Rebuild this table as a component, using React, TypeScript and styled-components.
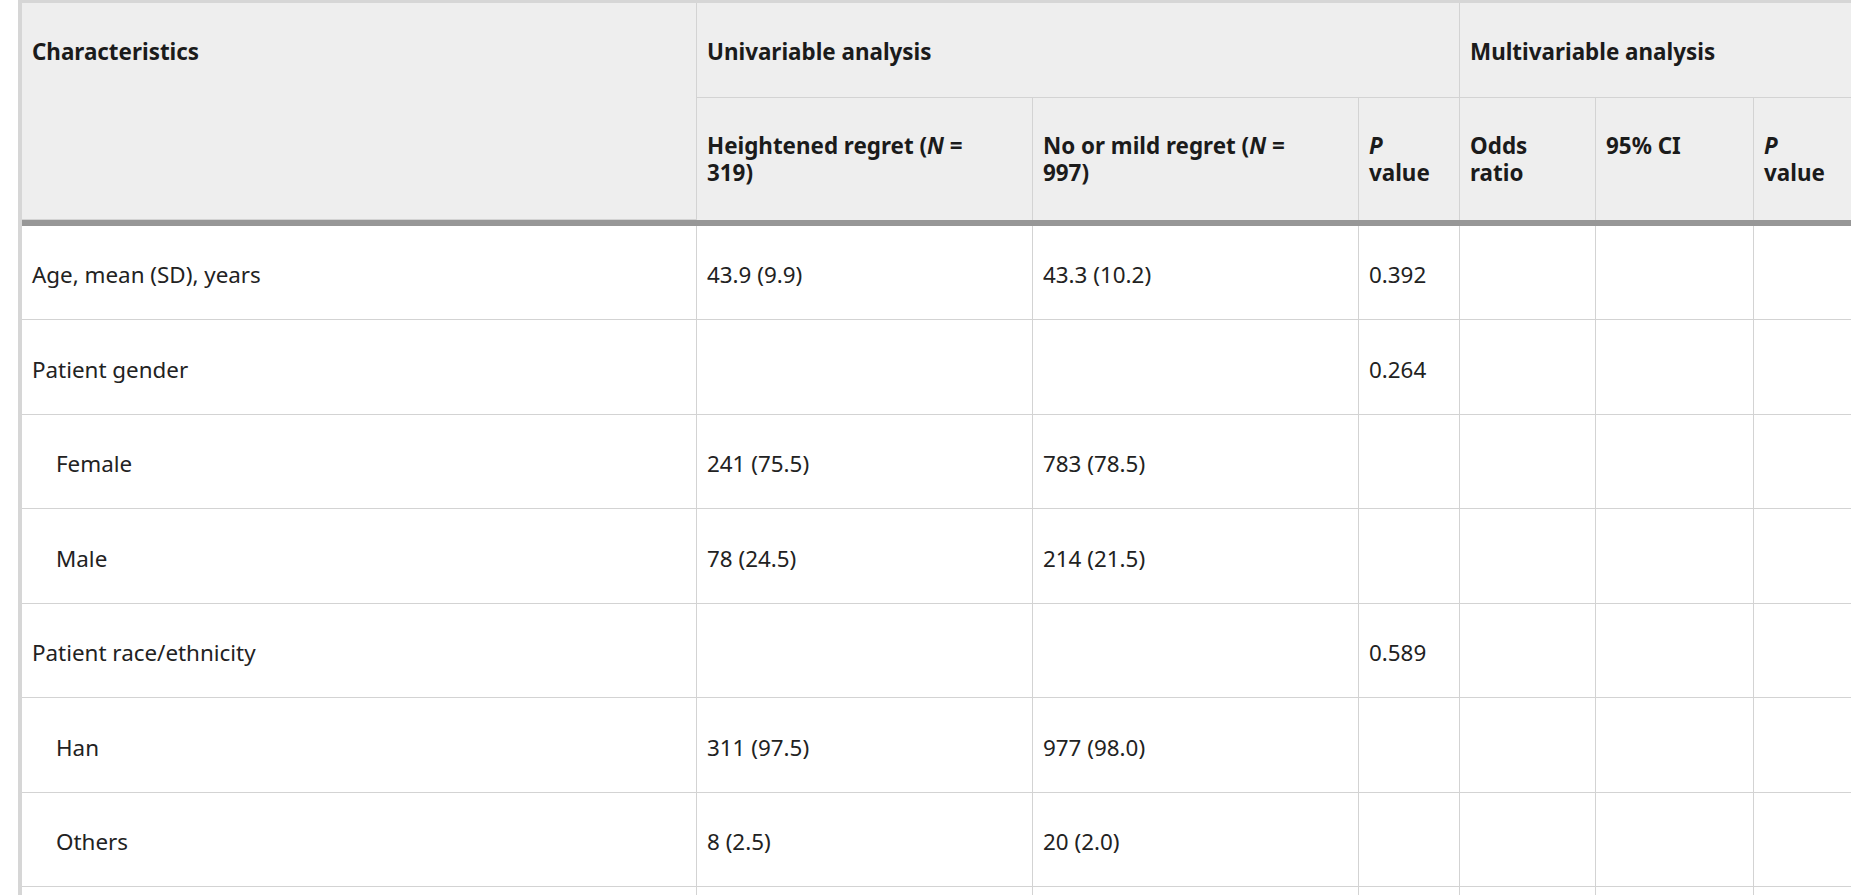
import React from 'react';
import styled, { createGlobalStyle } from 'styled-components';

type Row = {
  label: string;
  sub?: boolean;
  high?: string;
  low?: string;
  p?: string;
};

const rows: Row[] = [
  { label: 'Age, mean (SD), years', high: '43.9 (9.9)', low: '43.3 (10.2)', p: '0.392' },
  { label: 'Patient gender', p: '0.264' },
  { label: 'Female', sub: true, high: '241 (75.5)', low: '783 (78.5)' },
  { label: 'Male', sub: true, high: '78 (24.5)', low: '214 (21.5)' },
  { label: 'Patient race/ethnicity', p: '0.589' },
  { label: 'Han', sub: true, high: '311 (97.5)', low: '977 (98.0)' },
  { label: 'Others', sub: true, high: '8 (2.5)', low: '20 (2.0)' },
  { label: 'Education level', p: '0.118' },
];

const colWidths = [675, 336, 326, 101, 136, 158, 102];

const App: React.FC = () => {
  return (
    <>
      <GlobalStyle />
      <Page>
        <STable>
          <colgroup>
            {colWidths.map((w, i) => (
              <col key={i} style={{ width: w }} />
            ))}
          </colgroup>
          <thead>
            <tr>
              <Th rowSpan={2}>Characteristics</Th>
              <Th colSpan={3}>Univariable analysis</Th>
              <Th colSpan={3}>Multivariable analysis</Th>
            </tr>
            <tr>
              <SubTh>
                Heightened regret (<i>N</i> =<br />319)
              </SubTh>
              <SubTh>
                No or mild regret (<i>N</i> =<br />997)
              </SubTh>
              <SubTh>
                <i>P</i>
                <br />
                value
              </SubTh>
              <SubTh>
                Odds
                <br />
                ratio
              </SubTh>
              <SubTh>95% CI</SubTh>
              <SubTh>
                <i>P</i>
                <br />
                value
              </SubTh>
            </tr>
            <tr>
              <BarCell colSpan={7} />
            </tr>
          </thead>
          <tbody>
            {rows.map((r) => (
              <tr key={r.label}>
                <Td $sub={r.sub}>{r.label}</Td>
                <Td>{r.high}</Td>
                <Td>{r.low}</Td>
                <Td>{r.p}</Td>
                <Td />
                <Td />
                <Td />
              </tr>
            ))}
          </tbody>
        </STable>
      </Page>
    </>
  );
};

export default App;

const GlobalStyle = createGlobalStyle`
  html, body {
    margin: 0;
    padding: 0;
    background: #ffffff;
    overflow: hidden;
  }
  body {
    font-family: "Noto Sans", "Open Sans", sans-serif;
    color: #222222;
  }
`;

const Page = styled.div`
  padding-left: 18px;
  width: 1900px;
`;

const STable = styled.table`
  table-layout: fixed;
  width: 1838px;
  border-collapse: separate;
  border-spacing: 0;
  border-top: 3px solid #d6d6d6;
  border-left: 4px solid #d6d6d6;
  font-size: 22.4px;
  line-height: 27px;
`;

const Th = styled.th`
  background: #eeeeee;
  color: #1b1b1b;
  font-weight: 700;
  text-align: left;
  vertical-align: top;
  padding: 35px 10px 32px;
  border-right: 1px solid #d3d3d3;
  border-bottom: 1px solid #d3d3d3;
  i {
    font-style: italic;
  }
`;

const SubTh = styled(Th)`
  padding: 34px 10px 33.5px;
  border-bottom: 0;
`;

const BarCell = styled.td`
  height: 6px;
  padding: 0;
  background: #979797;
`;

const Td = styled.td<{ $sub?: boolean }>`
  color: #222222;
  vertical-align: top;
  padding: 35.5px 10px 31px ${(p) => (p.$sub ? '34px' : '10px')};
  border-right: 1px solid #d3d3d3;
  border-bottom: 1px solid #d3d3d3;
  white-space: nowrap;
`;
